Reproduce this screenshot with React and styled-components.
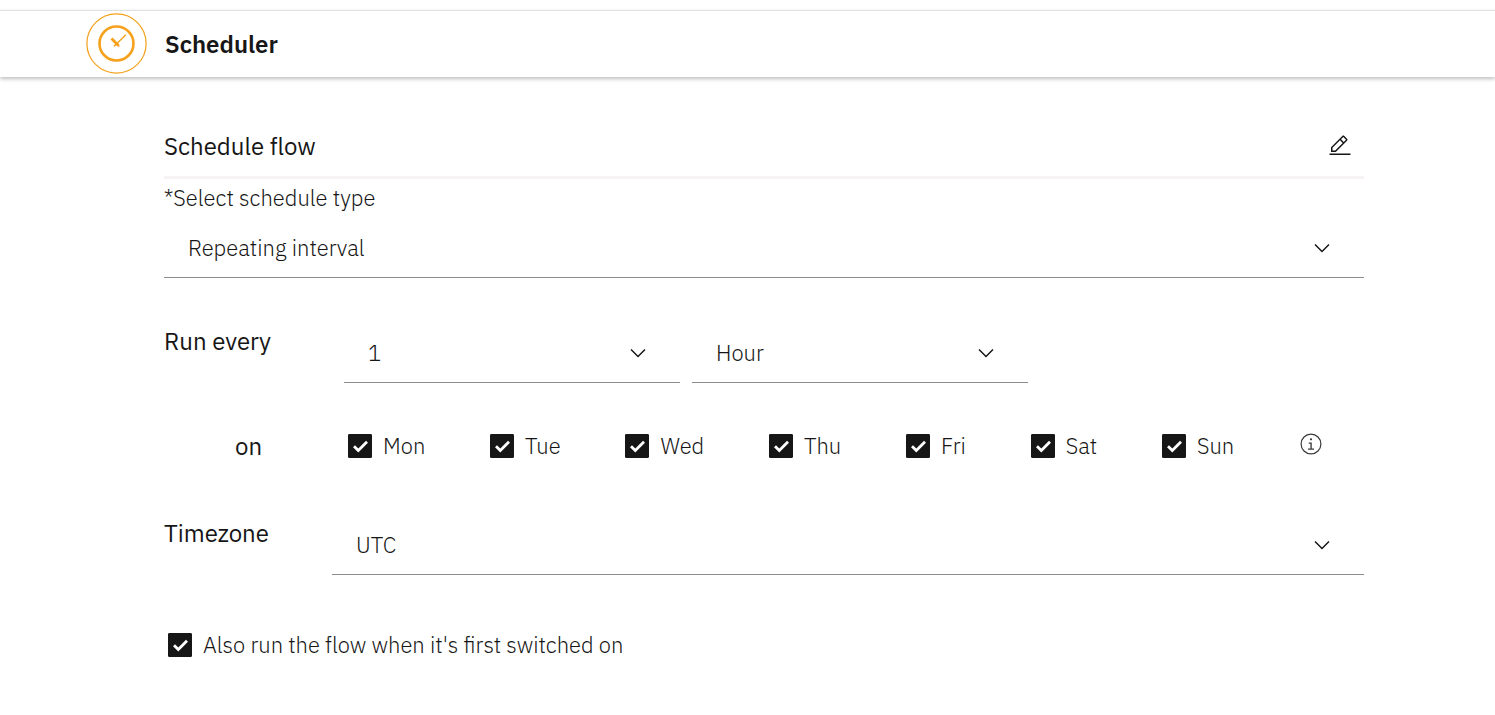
import React from "react";
import styled, { createGlobalStyle } from "styled-components";

const GlobalStyle = createGlobalStyle`
  *, *::before, *::after { box-sizing: border-box; }
  body {
    margin: 0;
    background: #fff;
    color: #161616;
    font-family: "IBM Plex Sans", "Noto Sans", sans-serif;
    font-size: 22px;
    line-height: 28px;
    font-weight: 300;
  }
`;

const Header = styled.header`
  display: flex;
  align-items: center;
  gap: 18px;
  height: 67px;
  margin-top: 10px;
  padding: 0 0 1px 86px;
  border-top: 1px solid #e0e0e0;
  box-shadow: 0 2px 4px rgba(0, 0, 0, 0.25);
`;

const HeaderTitle = styled.h1`
  margin: 0;
  font-size: 24px;
  line-height: 32px;
  font-weight: 600;
`;

const Main = styled.main`
  padding: 48px 131px 48px 164px;
`;

const FlowBar = styled.div`
  display: flex;
  justify-content: space-between;
  align-items: center;
  height: 54px;
  padding: 0 12px 9px 0;
  border-bottom: 3px solid #f7f2f4;
`;

const FlowTitle = styled.h2`
  margin: 0;
  font-size: 24px;
  line-height: 36px;
  font-weight: 400;
`;

const IconButton = styled.button`
  display: grid;
  place-items: center;
  padding: 0;
  border: 0;
  background: none;
  color: #161616;
  cursor: pointer;
`;

const FieldLabel = styled.label`
  display: block;
  padding: 5px 0 6px;
`;

const SelectBox = styled.div`
  display: grid;
  flex: ${(p) => (p.$wide ? "1" : "0 1 336px")};
  align-items: center;
  > * { grid-area: 1 / 1; }
  > svg {
    justify-self: end;
    margin-right: 30px;
    pointer-events: none;
  }
`;

const SelectControl = styled.select`
  appearance: none;
  width: 100%;
  height: 60px;
  padding: 0 72px 0 24px;
  border: 0;
  border-bottom: 1px solid #8d8d8d;
  border-radius: 0;
  background: transparent;
  color: #161616;
  font: inherit;
`;

const FormRow = styled.div`
  display: flex;
  gap: 12px;
  margin-top: ${(p) => p.$space}px;
`;

const RowLabel = styled.label`
  flex: 0 0 ${(p) => p.$width}px;
  font-size: 24px;
  line-height: 36px;
  font-weight: 400;
`;

const DaysRow = styled.fieldset`
  display: flex;
  align-items: center;
  margin: 44px 0 0;
  padding: 0 41px 0 0;
  border: 0;
`;

const DaysLabel = styled.span`
  flex: 0 0 184px;
  padding-left: 71px;
  font-size: 24px;
  line-height: 38px;
  font-weight: 400;
`;

const Days = styled.div`
  display: flex;
  flex: 1;
  justify-content: space-between;
  align-items: center;
  > button { padding-bottom: 4px; }
`;

const CheckLabel = styled.label`
  display: inline-flex;
  align-items: center;
  gap: 11px;
`;

const CheckBox = styled.span`
  display: grid;
  > * { grid-area: 1 / 1; }
  > svg { pointer-events: none; visibility: hidden; }
  > input:checked + svg { visibility: visible; }
`;

const CheckInput = styled.input`
  appearance: none;
  width: 24px;
  height: 24px;
  margin: 0;
  border: 1px solid #161616;
  border-radius: 1px;
  &:checked { background: #161616; }
`;

const FirstRun = styled.div`
  margin: 56px 0 0 4px;
`;

function SchedulerLogo() {
  return (
    <svg width="61" height="61" viewBox="0 0 61 61" fill="none" stroke="#f5a11c" aria-hidden="true">
      <circle cx="30.5" cy="30.5" r="29.6" strokeWidth="1.2" />
      <circle cx="30.5" cy="30.5" r="17" strokeWidth="2.6" />
      <path d="M25.5 25.5l7 7" strokeWidth="2.8" />
      <path d="M29 32.5L39.8 21.7" strokeWidth="1.3" />
      <path d="M28 33.2l2-2M31 31.5l2.3 2" strokeWidth="1.6" />
    </svg>
  );
}

function Chevron() {
  return (
    <svg width="24" height="24" viewBox="0 0 16 16" fill="#161616" aria-hidden="true">
      <path d="M8 11L3 6 3.7 5.3 8 9.6 12.3 5.3 13 6z" />
    </svg>
  );
}

function EditIcon() {
  return (
    <svg width="24" height="24" viewBox="0 0 32 32" fill="currentColor" aria-hidden="true">
      <path d="M2 26h28v2H2zM25.4 9c.8-.8.8-2 0-2.8l-3.6-3.6c-.8-.8-2-.8-2.8 0l-15 15V24h6.4l15-15zm-5-5L24 7.6l-3 3L17.4 7l3-3zM6 22v-3.6l10-10 3.6 3.6-10 10H6z" />
    </svg>
  );
}

function InfoIcon() {
  return (
    <svg width="24" height="24" viewBox="0 0 32 32" fill="#393939" aria-hidden="true">
      <path d="M17 22v-8h-4v1.6h2.2V22H12v1.7h8V22zM16 8.2a1.5 1.5 0 1 0 1.5 1.5A1.5 1.5 0 0 0 16 8.2z" />
      <path d="M16 30a14 14 0 1 1 14-14 14 14 0 0 1-14 14zm0-26.4a12.4 12.4 0 1 0 12.4 12.4A12.4 12.4 0 0 0 16 3.6z" />
    </svg>
  );
}

function Select({ id, options, wide, ...rest }) {
  return (
    <SelectBox $wide={wide}>
      <SelectControl id={id} {...rest}>
        {options.map((o) => <option key={o}>{o}</option>)}
      </SelectControl>
      <Chevron />
    </SelectBox>
  );
}

function Check({ children }) {
  return (
    <CheckLabel>
      <CheckBox>
        <CheckInput type="checkbox" defaultChecked />
        <svg width="24" height="24" viewBox="0 0 24 24" fill="none" stroke="#fff" strokeWidth="2.8" aria-hidden="true">
          <path d="M6 12.2l4.3 4.3L19 7.8" />
        </svg>
      </CheckBox>
      {children}
    </CheckLabel>
  );
}

const DAYS = ["Mon", "Tue", "Wed", "Thu", "Fri", "Sat", "Sun"];

export default function App() {
  return (
    <>
      <GlobalStyle />
      <Header>
        <SchedulerLogo />
        <HeaderTitle>Scheduler</HeaderTitle>
      </Header>
      <Main>
        <FlowBar>
          <FlowTitle>Schedule flow</FlowTitle>
          <IconButton type="button" aria-label="Edit"><EditIcon /></IconButton>
        </FlowBar>
        <FieldLabel htmlFor="type">*Select schedule type</FieldLabel>
        <Select id="type" wide options={["Repeating interval"]} />
        <FormRow $space={45}>
          <RowLabel htmlFor="count" $width={168}>Run every</RowLabel>
          <Select id="count" options={["1"]} />
          <Select options={["Hour"]} aria-label="Interval unit" />
        </FormRow>
        <DaysRow>
          <DaysLabel>on</DaysLabel>
          <Days>
            {DAYS.map((d) => <Check key={d}>{d}</Check>)}
            <IconButton type="button" aria-label="About days"><InfoIcon /></IconButton>
          </Days>
        </DaysRow>
        <FormRow $space={50}>
          <RowLabel htmlFor="zone" $width={156}>Timezone</RowLabel>
          <Select id="zone" wide options={["UTC"]} />
        </FormRow>
        <FirstRun>
          <Check>Also run the flow when it's first switched on</Check>
        </FirstRun>
      </Main>
    </>
  );
}
